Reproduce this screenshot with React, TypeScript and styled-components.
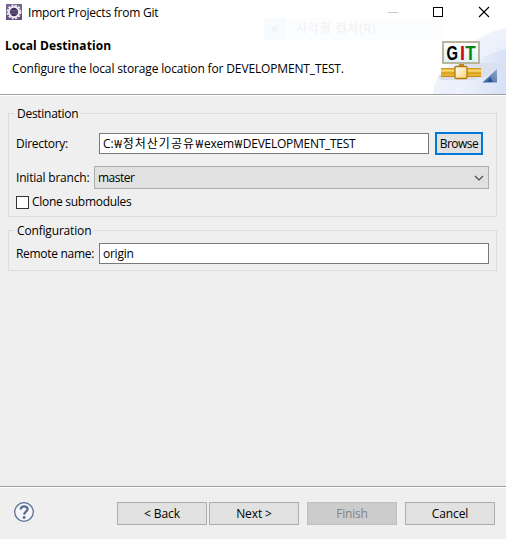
import React from 'react';
import styled, { createGlobalStyle } from 'styled-components';

const Global = createGlobalStyle`
  * { box-sizing: border-box; }
  body {
    margin: 0;
    background: #efefef;
    color: #000;
    font-family: "Open Sans", "Noto Sans CJK KR", sans-serif;
    font-size: 12px;
    line-height: 16px;
  }
`;

const Dialog = styled.main`
  position: relative;
  display: flex;
  flex-direction: column;
  width: 506px;
  height: 539px;
  overflow: hidden;
  background: #efefef;
`;

const Text = styled.span<{ $track?: number }>`
  white-space: pre;
  letter-spacing: ${(p) => p.$track ?? -0.28}px;
`;

const TitleBar = styled.header`
  display: flex;
  align-items: flex-start;
  height: 24px;
  padding: 4px 16px 0 6px;
  background: #fff;
`;

const Caption = styled(Text)`
  margin: 1px 0 0 6px;
  flex: 1;
`;

const WindowControls = styled.div`
  display: flex;
  gap: 34px;
  margin-top: 2px;
`;

const Banner = styled.section`
  display: flex;
  justify-content: space-between;
  height: 72px;
  flex: none;
  background: #fff;
  border-bottom: 1px solid #fff;
  box-shadow: inset 0 -1px #a0a0a0;
`;

const BannerText = styled.div`
  display: flex;
  flex-direction: column;
  gap: 7px;
  padding: 14px 0 0 4px;
`;

const Heading = styled.h1`
  margin: 0;
  padding-left: 1px;
  font-size: 12px;
  line-height: 16px;
  font-weight: 700;
  letter-spacing: 0.1px;
`;

const Description = styled(Text)`
  padding-left: 8px;
`;

const Ghost = styled.div`
  position: absolute;
  left: 264px;
  top: 18px;
  width: 179px;
  height: 22px;
  display: flex;
  align-items: center;
  background: #fcfdfe;
  color: #f0f1f2;
`;

const GhostMark = styled.div`
  display: flex;
  align-items: center;
  justify-content: center;
  width: 22px;
  height: 22px;
  margin-right: 10px;
  background: #f8fbfe;
  &::after {
    content: "";
    width: 6px;
    height: 6px;
    border-radius: 50%;
    background: #f1f2f4;
  }
`;

const Body = styled.div`
  flex: 1;
  display: flex;
  flex-direction: column;
  gap: 13px;
  padding: 17px 9px 0 8px;
`;

const Group = styled.section<{ $height: number }>`
  height: ${(p) => p.$height}px;
  border: 1px solid #dcdcdc;
  padding: 0 7px;
`;

const Legend = styled.div<{ $width: number }>`
  width: ${(p) => p.$width}px;
  height: 16px;
  margin: -8px 0 0 -1px;
  padding-left: 2px;
  background: #efefef;
`;

const Row = styled.div<{ $top: number }>`
  display: flex;
  align-items: center;
  margin-top: ${(p) => p.$top}px;
`;

const Label = styled.label<{ $width: number; $track?: number }>`
  width: ${(p) => p.$width}px;
  flex: none;
  white-space: nowrap;
  letter-spacing: ${(p) => p.$track ?? -0.28}px;
`;

const Field = styled.div<{ $width: number }>`
  display: flex;
  align-items: center;
  width: ${(p) => p.$width}px;
  height: 21px;
  padding-left: 3px;
  background: #fff;
  border: 1px solid #7a7a7a;
`;

const Won = styled.span`
  display: inline-flex;
  justify-content: center;
  width: 9px;
  font-family: "Open Sans", "Noto Sans", sans-serif;
  font-size: 11.5px;
`;

const Combo = styled.div`
  display: flex;
  align-items: center;
  justify-content: space-between;
  width: 395px;
  height: 23px;
  padding: 0 4px 0 3px;
  background: #e1e1e1;
  border: 1px solid #adadad;
`;

const CheckBox = styled.span`
  width: 13px;
  height: 13px;
  margin-right: 3px;
  background: #fff;
  border: 1px solid #333;
`;

const Button = styled.button<{ $width?: number; $focus?: boolean; $track?: number }>`
  width: ${(p) => p.$width ?? 90}px;
  height: 23px;
  padding: 0;
  font: inherit;
  color: #000;
  white-space: nowrap;
  letter-spacing: ${(p) => p.$track ?? -0.1}px;
  background: #e1e1e1;
  border: ${(p) => (p.$focus ? '2px solid #0078d7' : '1px solid #adadad')};
  &:disabled {
    color: #838383;
    background: #cccccc;
    border-color: #bfbfbf;
  }
`;

const BrowseSlot = styled.div`
  display: flex;
  margin-left: 6px;
`;

const Footer = styled.footer`
  display: flex;
  align-items: flex-start;
  height: 53px;
  padding: 15px 11px 0 13px;
  border-top: 1px solid #a0a0a0;
  box-shadow: inset 0 1px #fff;
`;

const Actions = styled.div`
  display: flex;
  gap: 8px;
  margin-left: auto;
`;

const Pair = styled.div`
  display: flex;
  gap: 2px;
`;

const AppIcon = () => (
  <svg width="16" height="16" viewBox="0 0 16 16">
    <rect width="16" height="16" fill="#63527f" />
    <path d="M0 0h16v5L0 11z" fill="#776694" />
    <circle cx="8" cy="8" r="6.5" fill="none" stroke="#efebf0" strokeWidth="1.8" strokeDasharray="2.1 1.3" />
    <circle cx="8" cy="8" r="5.1" fill="#40315f" stroke="#f3f0f2" strokeWidth="1.9" />
    <path d="M4.200 6.500h7.600M3.900 8h8.200M4.200 9.500h7.600" stroke="#74668a" strokeWidth=".7" />
  </svg>
);

const GitArt = () => (
  <svg width="76" height="70" viewBox="430 24 76 70">
    <defs>
      <linearGradient id="sky" x1="0" y1="0" x2="1" y2="1">
        <stop offset="0" stopColor="#fcfdff" />
        <stop offset="1" stopColor="#dee7f8" />
      </linearGradient>
      <linearGradient id="deep" x1="0" y1="0" x2="1" y2="0">
        <stop offset="0" stopColor="#f2f5fd" />
        <stop offset="1" stopColor="#d3def5" />
      </linearGradient>
      <linearGradient id="shade" x1="0" y1="0" x2="1" y2="0">
        <stop offset="0" stopColor="#bfc4ce" />
        <stop offset="1" stopColor="#dde2ec" />
      </linearGradient>
      <linearGradient id="gold" x1="0" y1="0" x2="0" y2="1">
        <stop offset="0" stopColor="#c98b10" />
        <stop offset=".3" stopColor="#ffe27a" />
        <stop offset=".55" stopColor="#d39a16" />
        <stop offset=".8" stopColor="#f1bd3c" />
        <stop offset="1" stopColor="#b7770a" />
      </linearGradient>
      <linearGradient id="plug" x1="0" y1="0" x2="1" y2="1">
        <stop offset="0" stopColor="#fff" />
        <stop offset="1" stopColor="#f7d374" />
      </linearGradient>
      <linearGradient id="screen" x1="0" y1="0" x2="0" y2="1">
        <stop offset="0" stopColor="#fff" />
        <stop offset="1" stopColor="#e0f2f7" />
      </linearGradient>
      <linearGradient id="corner" x1="0" y1="1" x2="1" y2="0">
        <stop offset="0" stopColor="#3a5f9b" />
        <stop offset="1" stopColor="#93a9cf" />
      </linearGradient>
    </defs>
    <path d="M433 94C434 82 438 75 445 71C460 48 481 33 506 28V94Z" fill="url(#sky)" />
    <path d="M454 94C464 70 482 54 506 49V94Z" fill="url(#deep)" opacity=".75" />
    <path d="M438 76L462 63H506V69L475 80H441Z" fill="url(#shade)" opacity=".5" />
    <rect x="443" y="42" width="36" height="21" fill="url(#screen)" stroke="#b9b59c" strokeWidth="2" />
    <g fontFamily="Liberation Sans" fontWeight="700" fontSize="20">
      <text x="446.500" y="60" textLength="11.500" lengthAdjust="spacingAndGlyphs" fill="#000">G</text>
      <text x="460" y="60" textLength="5" lengthAdjust="spacingAndGlyphs" fill="#cf0510">I</text>
      <text x="465.300" y="60" textLength="10.400" lengthAdjust="spacingAndGlyphs" fill="#098611">T</text>
    </g>
    <rect x="459" y="64" width="5" height="4" fill="#c28a1c" />
    <rect x="441" y="68" width="40" height="9" fill="url(#gold)" />
    <rect x="455" y="66.500" width="12" height="12" rx="1" fill="url(#plug)" stroke="#b8790b" strokeWidth="1.300" />
    <path d="M482.500 82.500L497 69v13.500Z" fill="url(#corner)" />
    <path d="M487 82L490 77L493 82Z" fill="#27508d" />
  </svg>
);

const HelpIcon = () => (
  <svg width="22" height="22" viewBox="0 0 22 22">
    <circle cx="11" cy="10" r="9.300" fill="#f4f6f9" stroke="#5d7196" strokeWidth="1.300" />
    <path d="M7.700 7.500C7.800 3.300 14.600 3.300 14.500 7.200C14.400 9.600 11.300 9.700 11.200 12.600" fill="none" stroke="#586d94" strokeWidth="2.300" />
    <circle cx="11.100" cy="15.500" r="1.450" fill="#586d94" />
  </svg>
);

export default function App() {
  return (
    <Dialog>
      <Global />
      <TitleBar>
        <AppIcon />
        <Caption $track={-0.22}>Import Projects from Git</Caption>
        <WindowControls>
          <svg width="12" height="12"><path d="M2 6.500h10" stroke="#c8c8c8" /></svg>
          <svg width="12" height="12"><rect x="1.500" y="1.500" width="9" height="9" fill="none" stroke="#000" /></svg>
          <svg width="12" height="12"><path d="M1 1l10 10M11 1L1 11" stroke="#000" strokeWidth="1.100" /></svg>
        </WindowControls>
      </TitleBar>
      <Banner>
        <BannerText>
          <Heading>Local Destination</Heading>
          <Description $track={-0.145}>Configure the local storage location for DEVELOPMENT_TEST.</Description>
        </BannerText>
        <GitArt />
      </Banner>
      <Ghost>
        <GhostMark />
        <Text $track={0.8}>사각형 캡처(R)</Text>
      </Ghost>
      <Body>
        <Group $height={104}>
          <Legend $width={65}><Text>Destination</Text></Legend>
          <Row $top={10}>
            <Label $width={83}>Directory:</Label>
            <Field $width={330}>
              <Text $track={0}>C:</Text>
              <Won>₩</Won>
              <Text $track={1}>정처산기공유</Text>
              <Won>₩</Won>
              <Text $track={-0.25}>exem</Text>
              <Won>₩</Won>
              <Text $track={-0.27}>DEVELOPMENT_TEST</Text>
            </Field>
            <BrowseSlot><Button $width={48} $focus $track={-0.5}>Browse</Button></BrowseSlot>
          </Row>
          <Row $top={11}>
            <Label $width={78} $track={-0.2}>Initial branch:</Label>
            <Combo>
              <Text $track={-0.5}>master</Text>
              <svg width="10" height="8"><path d="M1 2l4 4l4-4" fill="none" stroke="#444" strokeWidth="1.100" /></svg>
            </Combo>
          </Row>
          <Row $top={5}>
            <CheckBox />
            <Text>Clone submodules</Text>
          </Row>
        </Group>
        <Group $height={41}>
          <Legend $width={78}><Text $track={-0.17}>Configuration</Text></Legend>
          <Row $top={4}>
            <Label $width={83} $track={-0.3}>Remote name:</Label>
            <Field $width={390}><Text $track={-0.25}>origin</Text></Field>
          </Row>
        </Group>
      </Body>
      <Footer>
        <HelpIcon />
        <Actions>
          <Pair>
            <Button>&lt; Back</Button>
            <Button>Next &gt;</Button>
          </Pair>
          <Button disabled $track={-0.2}>Finish</Button>
          <Button $track={-0.1}>Cancel</Button>
        </Actions>
      </Footer>
    </Dialog>
  );
}
